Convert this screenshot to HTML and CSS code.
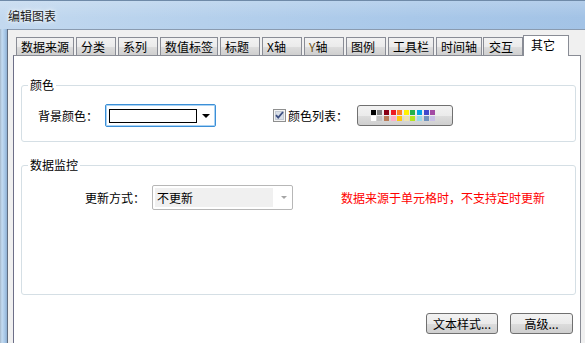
FILE: index.html
```html
<!DOCTYPE html>
<html lang="zh-CN">
<head>
  <meta charset="UTF-8" />
  <title>编辑图表</title>
  <link rel="stylesheet" href="styles.css">
</head>
<body>
  <div class="window">
    <div class="titlebar">编辑图表</div>

    <div class="frame">
      <div class="frame-left"></div>

      <div class="client">
        <div class="tabs">
          <div class="tab">数据来源</div>
          <div class="tab">分类</div>
          <div class="tab">系列</div>
          <div class="tab">数值标签</div>
          <div class="tab">标题</div>
          <div class="tab">X轴</div>
          <div class="tab"><span class="axis-y">Y</span>轴</div>
          <div class="tab">图例</div>
          <div class="tab">工具栏</div>
          <div class="tab">时间轴</div>
          <div class="tab">交互</div>
          <div class="tab active">其它</div>
        </div>

        <div class="pane">
          <fieldset class="group group-color">
            <legend>颜色</legend>
            <div class="row">
              <label class="field-label">背景颜色：</label>
              <div class="combo focused">
                <div class="color-preview"></div>
                <span class="arrow"></span>
              </div>

              <label class="check">
                <svg width="13" height="13" viewBox="0 0 13 13">
                  <rect x="0.5" y="0.5" width="12" height="12" fill="#f4f4f4" stroke="#8e8f8f" />
                  <rect x="2.5" y="2.5" width="8" height="8" fill="#d9dfe8" stroke="#c3cad4" />
                  <path d="M3 6.2 L5.2 8.6 L10 3" fill="none" stroke="#3d4f82" stroke-width="1.8" />
                </svg>
                <span>颜色列表：</span>
              </label>

              <button class="palette-btn">
                <span class="palette" id="palette"></span>
              </button>
            </div>
          </fieldset>

          <fieldset class="group group-monitor">
            <legend>数据监控</legend>
            <div class="row">
              <label class="field-label">更新方式：</label>
              <div class="combo disabled">
                <div class="combo-value">不更新</div>
                <span class="arrow"></span>
              </div>
              <span class="warning">数据来源于单元格时，不支持定时更新</span>
            </div>
          </fieldset>

          <div class="actions">
            <button class="btn btn-style">文本样式...</button>
            <button class="btn btn-adv">高级...</button>
          </div>
        </div>
      </div>
    </div>
  </div>

  <script>
    // Paint-style standard colours, two rows
    const farben = [
      "#000000", "#7f7f7f", "#880015", "#ed1c24", "#ff7f27", "#fff200", "#22b14c", "#00a2e8", "#3f48cc", "#a349a4",
      "#ffffff", "#c3c3c3", "#b97a57", "#ffaec9", "#ffc90e", "#efe4b0", "#b5e61d", "#99d9ea", "#7092be", "#c8bfe7"
    ];

    const palette = document.getElementById("palette");
    farben.forEach(farbe => {
      const swatch = document.createElement("i");
      swatch.style.background = farbe;
      palette.appendChild(swatch);
    });
  </script>
</body>
</html>
```

FILE: styles.css
```css
html, body {
  margin: 0;
  padding: 0;
}

body {
  width: 585px;
  height: 343px;
  overflow: hidden;
  font-family: "Noto Sans CJK SC", "Liberation Sans", sans-serif;
  font-size: 12px;
  color: #000;
  background: #f0f0f0;
}

.window {
  height: 343px;
  display: flex;
  flex-direction: column;
}

.titlebar {
  height: 29px;
  line-height: 29px;
  padding-left: 8px;
  font-size: 12px;
  color: #1b1b1b;
  text-shadow: 0 0 6px #fff, 0 0 3px #fff;
  background:
    linear-gradient(180deg, rgba(255, 255, 255, 0.18), rgba(255, 255, 255, 0) 60%),
    linear-gradient(90deg, #c3d9ef 0%, #b5d0ec 35%, #a9c8e9 70%, #a3c3e6 100%);
  border-top: 1px solid #6f8aa8;
  box-sizing: border-box;
}

.frame {
  flex: 1;
  display: flex;
}

.frame-left {
  width: 7px;
  background: linear-gradient(90deg, #a4b6c8 0, #c4dcf2 2px, #a6c6e6 5px, #8fb0d2 7px);
  border-right: 1px solid #606d80;
}

.client {
  flex: 1;
  padding: 5px 0 0 5px;
  background: #f0f0f0;
  border-top: 1px solid #8a9bb0;
  display: flex;
  flex-direction: column;
}

/* tab strip */

.tabs {
  display: flex;
  align-items: flex-end;
  height: 20px;
  padding-left: 3px;
}

.tab {
  height: 18px;
  line-height: 17px;
  min-width: 40px;
  padding: 0 4px;
  margin-right: 2px;
  box-sizing: border-box;
  border: 1px solid #898c95;
  border-bottom: none;
  background: linear-gradient(180deg, #f2f2f2 0%, #ebebeb 50%, #dddddd 51%, #cfcfcf 100%);
  white-space: nowrap;
}

.tabs .tab:nth-child(1),
.tabs .tab:nth-child(4) {
  min-width: 58px;
}

.tab:nth-child(9),
.tab:nth-child(10) {
  min-width: 46px;
}

.tab:nth-child(10) {
  margin-right: 1px;
}

.tab:nth-child(11) {
  margin-right: 0;
  padding-left: 5px;
}

.tab.active {
  height: 21px;
  min-width: 46px;
  padding-left: 7px;
  margin-bottom: -1px;
  background: #fff;
  line-height: 18px;
  position: relative;
  z-index: 1;
}

.axis-y {
  color: #6e5418;
}

/* content pane */

.pane {
  flex: 1;
  margin-right: 4px;
  padding: 21px 4px 0 7px;
  background: #fff;
  border: 1px solid #898c95;
  border-left-color: #6d6f88;
  border-bottom: none;
}

.group {
  margin: 0;
  padding: 0;
  border: 1px solid #d5dfe5;
  border-radius: 3px;
}

.group legend {
  margin-left: 6px;
  padding: 0 2px;
  line-height: 16px;
}

.group-color {
  padding: 11px 0 14px;
}

.group-monitor {
  margin-top: 15px;
  padding: 12px 0 84px;
}

.row {
  display: flex;
  align-items: center;
}

.group-color .row {
  padding-left: 16px;
}

.group-monitor .row {
  padding-left: 63px;
}

.field-label {
  line-height: 16px;
  margin-right: 7px;
}

/* combo boxes */

.combo {
  display: flex;
  align-items: center;
  box-sizing: border-box;
  border-radius: 2px;
}

.combo .arrow {
  width: 0;
  height: 0;
  border-left: 4px solid transparent;
  border-right: 4px solid transparent;
}

.combo.focused {
  width: 111px;
  height: 23px;
  padding: 3px 5px 3px 3px;
  border: 1px solid #3c8fd6;
  box-shadow: inset 0 0 0 1px #a9d3f5;
}

.color-preview {
  width: 88px;
  height: 14px;
  box-sizing: border-box;
  border: 1px solid #000;
  background: #fff;
}

.combo.focused .arrow {
  margin-left: 5px;
  border-top: 4px solid #000;
}

.combo.disabled {
  width: 141px;
  height: 25px;
  padding: 2px;
  border: 1px solid #b7b7b7;
}

.combo-value {
  width: 118px;
  height: 19px;
  line-height: 19px;
  padding-left: 2px;
  box-sizing: border-box;
  background: #f0f0f0;
}

.combo.disabled .arrow {
  margin-left: 8px;
  border-left-width: 3px;
  border-right-width: 3px;
  border-top: 3px solid #a5a5a5;
}

.warning {
  margin-left: 48px;
  color: #ff0000;
  line-height: 16px;
}

/* checkbox + palette */

.check {
  display: flex;
  align-items: center;
  margin-left: 57px;
}

.check svg {
  display: block;
  margin-right: 2px;
}

.palette-btn {
  width: 96px;
  height: 21px;
  margin-left: 9px;
  padding: 0;
  display: flex;
  align-items: center;
  justify-content: center;
  border: 1px solid #707070;
  border-radius: 3px;
  background: linear-gradient(180deg, #f2f2f2 0%, #ebebeb 50%, #dddddd 51%, #cfcfcf 100%);
}

.palette {
  display: grid;
  grid-template-columns: repeat(10, 5px);
  grid-auto-rows: 5px;
  column-gap: 1.6px;
  row-gap: 1px;
  padding-right: 4px;
}

.palette i {
  display: block;
}

/* bottom buttons */

.actions {
  display: flex;
  justify-content: flex-end;
  gap: 12px;
  margin-top: 18px;
  padding-right: 3px;
}

.btn {
  height: 21px;
  padding: 0;
  font-family: inherit;
  font-size: 12px;
  color: #000;
  border: 1px solid #707070;
  border-radius: 3px;
  background: linear-gradient(180deg, #f2f2f2 0%, #ebebeb 50%, #dddddd 51%, #cfcfcf 100%);
}

.btn-style {
  width: 72px;
}

.btn-adv {
  width: 63px;
}
```
